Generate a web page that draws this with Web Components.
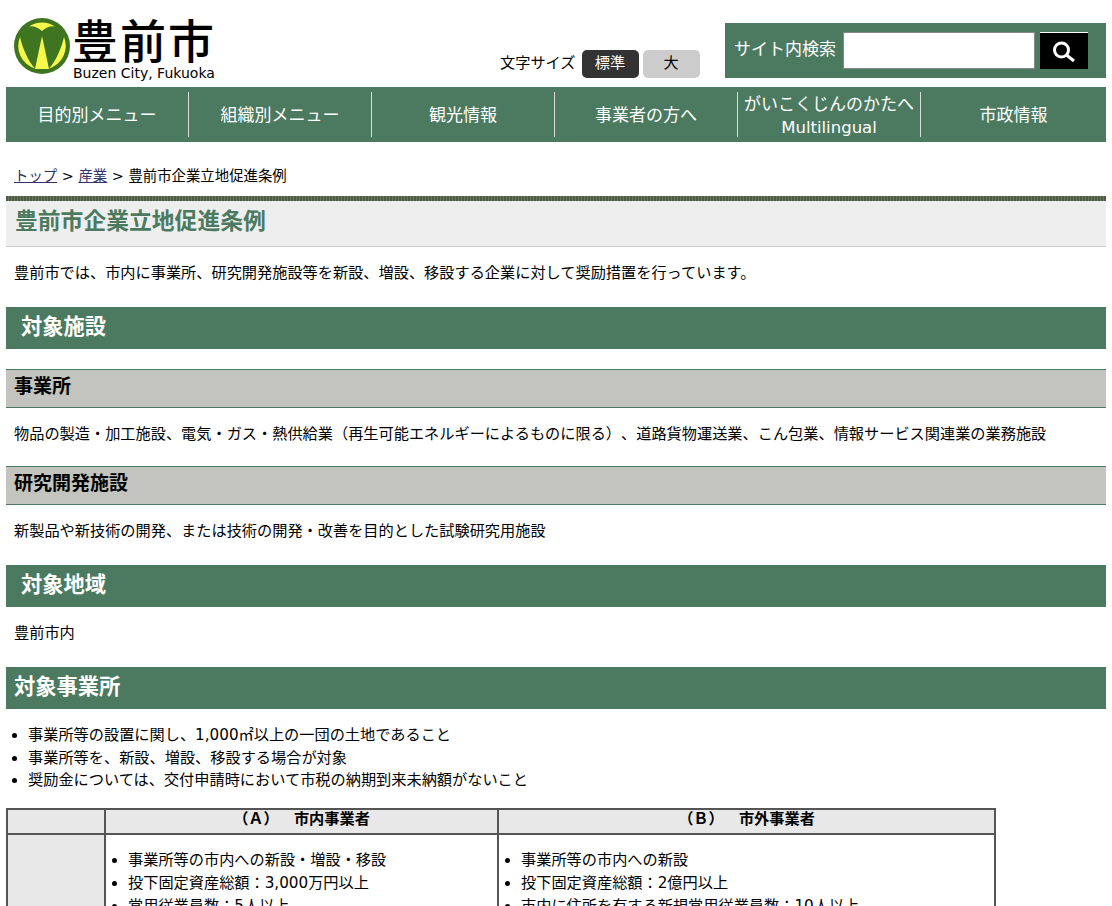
<!DOCTYPE html>
<html lang="ja">
<head>
<meta charset="utf-8">
<title>豊前市企業立地促進条例</title>
<style>
html, body { margin: 0; height: 906px; overflow: hidden; background: #fff; }
body {
  padding: 0 6px;
  color: #000;
  font: 15.2px/1.6 "DejaVu Sans", "Noto Sans CJK JP", sans-serif;
  text-spacing-trim: space-all;
}
</style>
</head>
<body>
<site-header></site-header>
<global-nav></global-nav>
<bread-crumb></bread-crumb>
<page-title>豊前市企業立地促進条例</page-title>
<text-block>豊前市では、市内に事業所、研究開発施設等を新設、増設、移設する企業に対して奨励措置を行っています。</text-block>
<section-head indent>対象施設</section-head>
<sub-head style="margin-top:20px">事業所</sub-head>
<text-block>物品の製造・加工施設、電気・ガス・熱供給業（再生可能エネルギーによるものに限る）、道路貨物運送業、こん包業、情報サービス関連業の業務施設</text-block>
<sub-head>研究開発施設</sub-head>
<text-block>新製品や新技術の開発、または技術の開発・改善を目的とした試験研究用施設</text-block>
<section-head indent>対象地域</section-head>
<text-block>豊前市内</text-block>
<section-head>対象事業所</section-head>
<dot-list style="margin-top:15px">
  <li>事業所等の設置に関し、1,000㎡以上の一団の土地であること</li>
  <li>事業所等を、新設、増設、移設する場合が対象</li>
  <li>奨励金については、交付申請時において市税の納期到来未納額がないこと</li>
</dot-list>
<terms-table></terms-table>

<script>
class SiteHeader extends HTMLElement {
  constructor() {
    super();
    this.attachShadow({ mode: "open" });
    this.shadowRoot.innerHTML = `
<style>
:host { display: flex; height: 87px; position: relative; }
.logo { display: flex; flex-direction: column; margin: 12px 0 0 8px; width: 300px; }
.brand { display: flex; align-items: flex-start; }
.name { font: 500 46px/46px "Noto Sans CJK JP", sans-serif; letter-spacing: 2px; margin: 3px 0 0 -1px; }
.en { font-size: 14px; line-height: 16px; margin: -9px 0 0 59px; white-space: nowrap; }
svg { flex: none; margin-top: 6px; margin-right: 3px; }
.size { display: flex; align-items: flex-start; gap: 4px; position: absolute; left: 494px; top: 50px; line-height: 26px; }
.size span { margin-right: 3px; }
.btn { width: 57px; height: 28px; box-sizing: border-box; padding-right: 2px; border-radius: 5px; background: #ccc; text-align: center; }
.btn.on { background: #333; color: #fff; }
.search { margin-left: auto; align-self: flex-start; margin-top: 23px; width: 381px; height: 55px; box-sizing: border-box;
  background: #4c7a60; color: #fff; display: flex; align-items: center; padding: 0 18px 0 9px; font-size: 17px; }
.search span { margin-bottom: 1px; }
.field { width: 192px; height: 37px; box-sizing: border-box; background: #fff; border: 1px solid #888; margin: 0 5px 0 7px; }
.go { width: 48px; height: 37px; box-sizing: border-box; border-top: 1px solid #fff; background: #000; display: flex; align-items: center; justify-content: center; }
</style>
<div class="logo">
  <div class="brand">
    <svg width="56" height="56" viewBox="0 0 56 56">
      <circle cx="28" cy="28" r="28" fill="#3f7420"/>
      <g fill="#f8f84a">
        <path d="M6 19A23.500 23.500 0 0 0 21 50.500C14 43 8.500 30 6 19z"/>
        <path d="M50 19A23.500 23.500 0 0 1 35 50.500C42 43 47.500 30 50 19z"/>
        <path d="M15 8.400A23.500 23.500 0 0 1 41 8.400Q34 7.500 28 13 22 7.500 15 8.400z"/>
        <path d="M28 18L21 51h14z"/>
      </g>
    </svg>
    <div class="name">豊前市</div>
  </div>
  <div class="en">Buzen City, Fukuoka</div>
</div>
<div class="size"><span>文字サイズ</span><div class="btn on">標準</div><div class="btn">大</div></div>
<div class="search">
  <span>サイト内検索</span>
  <div class="field"></div>
  <div class="go">
    <svg width="24" height="24" viewBox="0 0 24 24" style="margin:0"><circle cx="9.500" cy="11" r="7" fill="none" stroke="#fff" stroke-width="3"/><path d="M14.500 16l7.500 6" stroke="#fff" stroke-width="3"/></svg>
  </div>
</div>`;
  }
}
customElements.define("site-header", SiteHeader);

class GlobalNav extends HTMLElement {
  constructor() {
    super();
    this.attachShadow({ mode: "open" });
    const items = ["目的別メニュー", "組織別メニュー", "観光情報", "事業者の方へ", "がいこくじんのかたへ<small>Multilingual</small>", "市政情報"];
    this.shadowRoot.innerHTML = `
<style>
:host { display: flex; height: 55px; background: #4c7a60; color: #fff; box-sizing: border-box; padding: 5px 0; font-size: 17px; }
a { flex: 0 0 183px; box-sizing: border-box; padding-top: 2px; display: flex; flex-direction: column; align-items: center; justify-content: center; line-height: 23px; border-left: 1px solid #ddd; white-space: nowrap; }
a:first-of-type { border-left: 0; flex-basis: 182px; }
a:last-child { flex: 1; }
small { font-size: 16.500px; }
</style>
${items.map((t) => `<a>${t}</a>`).join("")}`;
  }
}
customElements.define("global-nav", GlobalNav);

class BreadCrumb extends HTMLElement {
  constructor() {
    super();
    this.attachShadow({ mode: "open" });
    this.shadowRoot.innerHTML = `
<style>
:host { display: block; padding: 23px 8px 8px; line-height: 23px; font-size: 14.400px; height: 23px; }
a { color: #333366; text-decoration: underline; }
</style>
<a>トップ</a> &gt; <a>産業</a> &gt; 豊前市企業立地促進条例`;
  }
}
customElements.define("bread-crumb", BreadCrumb);

class PageTitle extends HTMLElement {
  constructor() {
    super();
    this.attachShadow({ mode: "open" });
    this.shadowRoot.innerHTML = `
<style>
:host { display: block; border-bottom: 1px solid #ccc; background: #eee; position: relative;
  color: #4c7a60; font-size: 22.800px; font-weight: 700; line-height: 40px; padding: 5px 9px 0; height: 45px; }
.stripe { position: absolute; left: 0; right: 0; top: 0; height: 5px;
  background: repeating-linear-gradient(90deg, #4f5c45 0 2px, #6b7a5c 2px 3px); }
</style><div class="stripe"></div><slot></slot>`;
  }
}
customElements.define("page-title", PageTitle);

class TextBlock extends HTMLElement {
  constructor() {
    super();
    this.attachShadow({ mode: "open" });
    this.shadowRoot.innerHTML = `
<style>
:host { display: block; padding: 15px 8px 20px; line-height: 23px; }
</style><slot></slot>`;
  }
}
customElements.define("text-block", TextBlock);

class SectionHead extends HTMLElement {
  constructor() {
    super();
    this.attachShadow({ mode: "open" });
    this.shadowRoot.innerHTML = `
<style>
:host { display: block; margin-top: 2px; height: 42px; background: #4c7a60; color: #fff; font-size: 21.280px; font-weight: 700; line-height: 39px; padding-left: 8px; }
:host([indent]) { padding-left: 15px; }
</style><slot></slot>`;
  }
}
customElements.define("section-head", SectionHead);

class SubHead extends HTMLElement {
  constructor() {
    super();
    this.attachShadow({ mode: "open" });
    this.shadowRoot.innerHTML = `
<style>
:host { display: block; background: #c2c4bd; border-top: 1px solid #4c7a60; border-bottom: 1px solid #4c7a60; height: 37px;
  font-size: 19px; font-weight: 700; line-height: 33px; padding-left: 8px; }
</style><slot></slot>`;
  }
}
customElements.define("sub-head", SubHead);

class DotList extends HTMLElement {
  constructor() {
    super();
    this.attachShadow({ mode: "open" });
    this.shadowRoot.innerHTML = `
<style>
:host { display: block; }
ul { margin: 0; padding: 0 0 0 22px; line-height: 22.500px; }
</style><ul><slot></slot></ul>`;
  }
}
customElements.define("dot-list", DotList);

class TermsTable extends HTMLElement {
  constructor() {
    super();
    this.attachShadow({ mode: "open" });
    this.shadowRoot.innerHTML = `
<style>
:host { display: block; margin-top: 16px; }
table { border-collapse: collapse; width: 990px; table-layout: fixed; border: 2px solid #555; }
th, td { border: 2px solid #555; padding: 0; vertical-align: top; }
th { background: #e8e8e8; font-size: 15.200px; line-height: 18px; height: 23px; vertical-align: top; }
td.side { background: #e8e8e8; }
ul { margin: 14px 0 14px; padding: 0 0 0 22px; line-height: 23px; }
</style>
<table>
  <colgroup><col style="width:98px"><col style="width:393px"><col></colgroup>
  <tr><th></th><th>（Ａ）　市内事業者</th><th>（Ｂ）　市外事業者</th></tr>
  <tr>
    <td class="side"></td>
    <td><ul><li>事業所等の市内への新設・増設・移設</li><li>投下固定資産総額：3,000万円以上</li><li>常用従業員数：5人以上</li></ul></td>
    <td><ul><li>事業所等の市内への新設</li><li>投下固定資産総額：2億円以上</li><li>市内に住所を有する新規常用従業員数：10人以上</li></ul></td>
  </tr>
</table>`;
  }
}
customElements.define("terms-table", TermsTable);
</script>
</body>
</html>
